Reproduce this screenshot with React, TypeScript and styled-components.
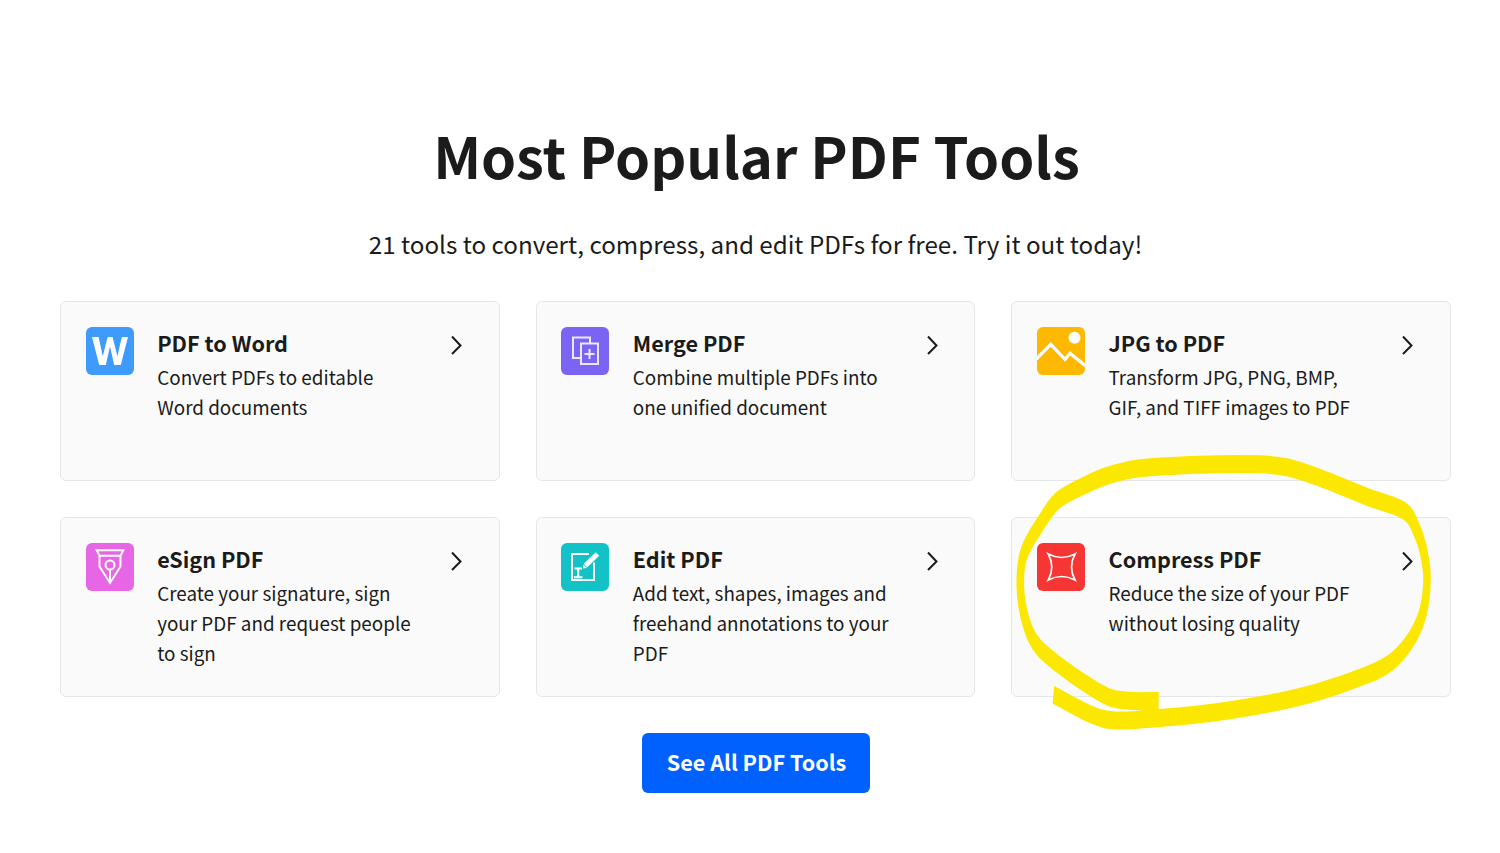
import React from "react";
import styled, { createGlobalStyle } from "styled-components";

const Global = createGlobalStyle`
  html, body { margin: 0; padding: 0; background: #fff; }
  body { font-family: "Noto Sans CJK SC", "Noto Sans", sans-serif; color: #1b1b1b; }
`;

const Page = styled.main`
  position: relative;
  width: 1500px;
  height: 853px;
  overflow: hidden;
  box-sizing: border-box;
  padding: 120px 49px 0 60px;
  display: flex;
  flex-direction: column;
  align-items: center;
`;

const Heading = styled.h1`
  margin: -3px 0 0 2px;
  font-size: 56.2px;
  line-height: 76px;
  font-weight: 700;
  color: #1b1b1b;
  text-align: center;
`;

const Subtitle = styled.p`
  margin: 31px 0 0;
  font-size: 24.2px;
  line-height: 40px;
  font-weight: 400;
  color: #1b1b1b;
  text-align: center;
`;

const Grid = styled.div`
  margin-top: 37px;
  width: 100%;
  display: grid;
  grid-template-columns: repeat(3, 1fr);
  grid-auto-rows: 180px;
  gap: 36px;
`;

const Card = styled.a`
  box-sizing: border-box;
  display: flex;
  align-items: flex-start;
  padding: 25px 30.6px 25px 24.7px;
  background: #fafafa;
  border: 1px solid #e6e6e6;
  border-radius: 6px;
`;

const IconBox = styled.div<{ $bg: string }>`
  flex: 0 0 48px;
  width: 48px;
  height: 48px;
  border-radius: 6px;
  background: ${(p) => p.$bg};
  overflow: hidden;
  svg { display: block; }
`;

const Body = styled.div`
  margin: -1px 0 0 23.5px;
  white-space: nowrap;
`;

const Title = styled.h3`
  margin: 0;
  font-size: 21.6px;
  line-height: 34px;
  font-weight: 700;
  color: #1b1b1b;
`;

const Description = styled.p`
  margin: 2px 0 0;
  font-size: 18.85px;
  line-height: 30px;
  font-weight: 400;
  color: #1b1b1b;
`;

const Chevron = styled.svg`
  margin-left: auto;
  margin-top: 6px;
  flex: 0 0 24px;
`;

const CTA = styled.a`
  margin-top: 36px;
  box-sizing: border-box;
  width: 228px;
  height: 60px;
  padding: 0 0 3px 2px;
  display: flex;
  align-items: center;
  justify-content: center;
  background: #0061ff;
  color: #fff;
  border-radius: 6px;
  font-size: 21.6px;
  font-weight: 700;
`;

const Scribble = styled.svg`
  position: absolute;
  left: 1000px;
  top: 440px;
  pointer-events: none;
`;

const stroke = { fill: "none", stroke: "#fff", strokeWidth: 2 } as const;

const WordIcon = () => (
  <svg width="48" height="48" viewBox="0 0 48 48">
    <path d="M6 10h6.6l4.2 19.2L21.6 10h5l4.8 19.2L35.8 10H42l-7.2 28h-6.6L24 19.5 19.8 38h-6.6z" fill="#fff" />
  </svg>
);
const MergeIcon = () => (
  <svg width="48" height="48" viewBox="0 0 48 48">
    <path d="M19.5 31H12V10.5h17v6" {...stroke} opacity=".85" />
    <rect x="20" y="16.5" width="17" height="20.5" {...stroke} opacity=".85" />
    <path d="M28.5 22v10M23.5 27h10" {...stroke} opacity=".85" />
  </svg>
);
const ImageIcon = () => (
  <svg width="48" height="48" viewBox="0 0 48 48">
    <circle cx="37.5" cy="10.7" r="6" fill="#fff" />
    <path d="M-1 32.3L13.7 17.3 28 32.3 33 26.3 50 40" fill="none" stroke="#fff" strokeWidth="3.3" />
  </svg>
);
const PenIcon = () => (
  <svg width="48" height="48" viewBox="0 0 48 48">
    <path d="M10.7 7.3h26.6l-2.8 5.4H13.5z" {...stroke} />
    <path d="M13.5 13v10.5L24 40l10.5-16.5V13" {...stroke} />
    <circle cx="24" cy="22" r="4.5" {...stroke} />
    <path d="M24 26.5V40" {...stroke} />
  </svg>
);
const EditIcon = () => (
  <svg width="48" height="48" viewBox="0 0 48 48">
    <path d="M28 11H11v26h22V19.5" {...stroke} />
    <path d="M24.5 22.5L36.5 11" fill="none" stroke="#fff" strokeWidth="5" />
    <path d="M22 25.5l.5-4 3.5 3.5z" fill="#fff" />
    <path d="M13.5 25.5h7.5M17.2 25.5v8.7M13 34.2h8.5" {...stroke} />
  </svg>
);
const CompressIcon = () => (
  <svg width="48" height="48" viewBox="0 0 48 48">
    <path d="M11.3 11Q24.6 18 38 11Q31 24 38 37Q24.6 30 11.3 37Q18.3 24 11.3 11z" fill="none" stroke="#fff" strokeWidth="1.7" strokeLinejoin="miter" />
  </svg>
);

const tools = [
  { bg: "#3f9bfb", icon: <WordIcon />, title: "PDF to Word", lines: ["Convert PDFs to editable", "Word documents"] },
  { bg: "#7b64f4", icon: <MergeIcon />, title: "Merge PDF", lines: ["Combine multiple PDFs into", "one unified document"] },
  { bg: "#ffb800", icon: <ImageIcon />, title: "JPG to PDF", lines: ["Transform JPG, PNG, BMP,", "GIF, and TIFF images to PDF"] },
  { bg: "#e666e6", icon: <PenIcon />, title: "eSign PDF", lines: ["Create your signature, sign", "your PDF and request people", "to sign"] },
  { bg: "#13c2c6", icon: <EditIcon />, title: "Edit PDF", lines: ["Add text, shapes, images and", "freehand annotations to your", "PDF"] },
  { bg: "#f63535", icon: <CompressIcon />, title: "Compress PDF", lines: ["Reduce the size of your PDF", "without losing quality"] },
];

const NIB_X = 0.42;

const pts: [number, number][] = [
  [476, 783], [400, 783], [340, 776], [290, 752], [200, 692], [115, 620], [78, 545], [61, 440], [72, 340],
  [125, 245], [175, 180], [250, 138], [320, 108], [420, 85], [600, 74], [780, 73], [860, 82], [950, 110],
  [1100, 170], [1212, 212], [1250, 270], [1272, 340], [1281, 420], [1268, 520], [1232, 600], [1175, 665],
  [1100, 705], [950, 757], [800, 792], [600, 823], [440, 837], [340, 841], [270, 822], [160, 764],
];

const smooth = (p: [number, number][]) => {
  const q = p.map(([x, y]) => [x / NIB_X, y]);
  let d = `M${q[0][0]} ${q[0][1]}`;
  for (let i = 0; i < q.length - 1; i++) {
    const a = q[Math.max(i - 1, 0)];
    const b = q[i];
    const c = q[i + 1];
    const e = q[Math.min(i + 2, q.length - 1)];
    d += `C${b[0] + (c[0] - a[0]) / 6} ${b[1] + (c[1] - a[1]) / 6} ${c[0] - (e[0] - b[0]) / 6} ${c[1] - (e[1] - b[1]) / 6} ${c[0]} ${c[1]}`;
  }
  return d;
};

export default function App() {
  return (
    <Page>
      <Global />
      <Heading>Most Popular PDF Tools</Heading>
      <Subtitle>21 tools to convert, compress, and edit PDFs for free. Try it out today!</Subtitle>
      <Grid>
        {tools.map((t) => (
          <Card key={t.title}>
            <IconBox $bg={t.bg}>{t.icon}</IconBox>
            <Body>
              <Title>{t.title}</Title>
              <Description>
                {t.lines.map((l) => (
                  <React.Fragment key={l}>
                    {l}
                    <br />
                  </React.Fragment>
                ))}
              </Description>
            </Body>
            <Chevron width="24" height="24" viewBox="0 0 24 24" fill="none" stroke="#1b1b1b" strokeWidth="2">
              <path d="M8 3.5L16.5 12.5 8 21" />
            </Chevron>
          </Card>
        ))}
      </Grid>
      <CTA>See All PDF Tools</CTA>
      <Scribble width="460" height="300" viewBox="0 0 1380 900">
        <path d={smooth(pts)} transform={`scale(${NIB_X} 1)`} fill="none" stroke="#fbe700" strokeWidth="54" />
      </Scribble>
    </Page>
  );
}
